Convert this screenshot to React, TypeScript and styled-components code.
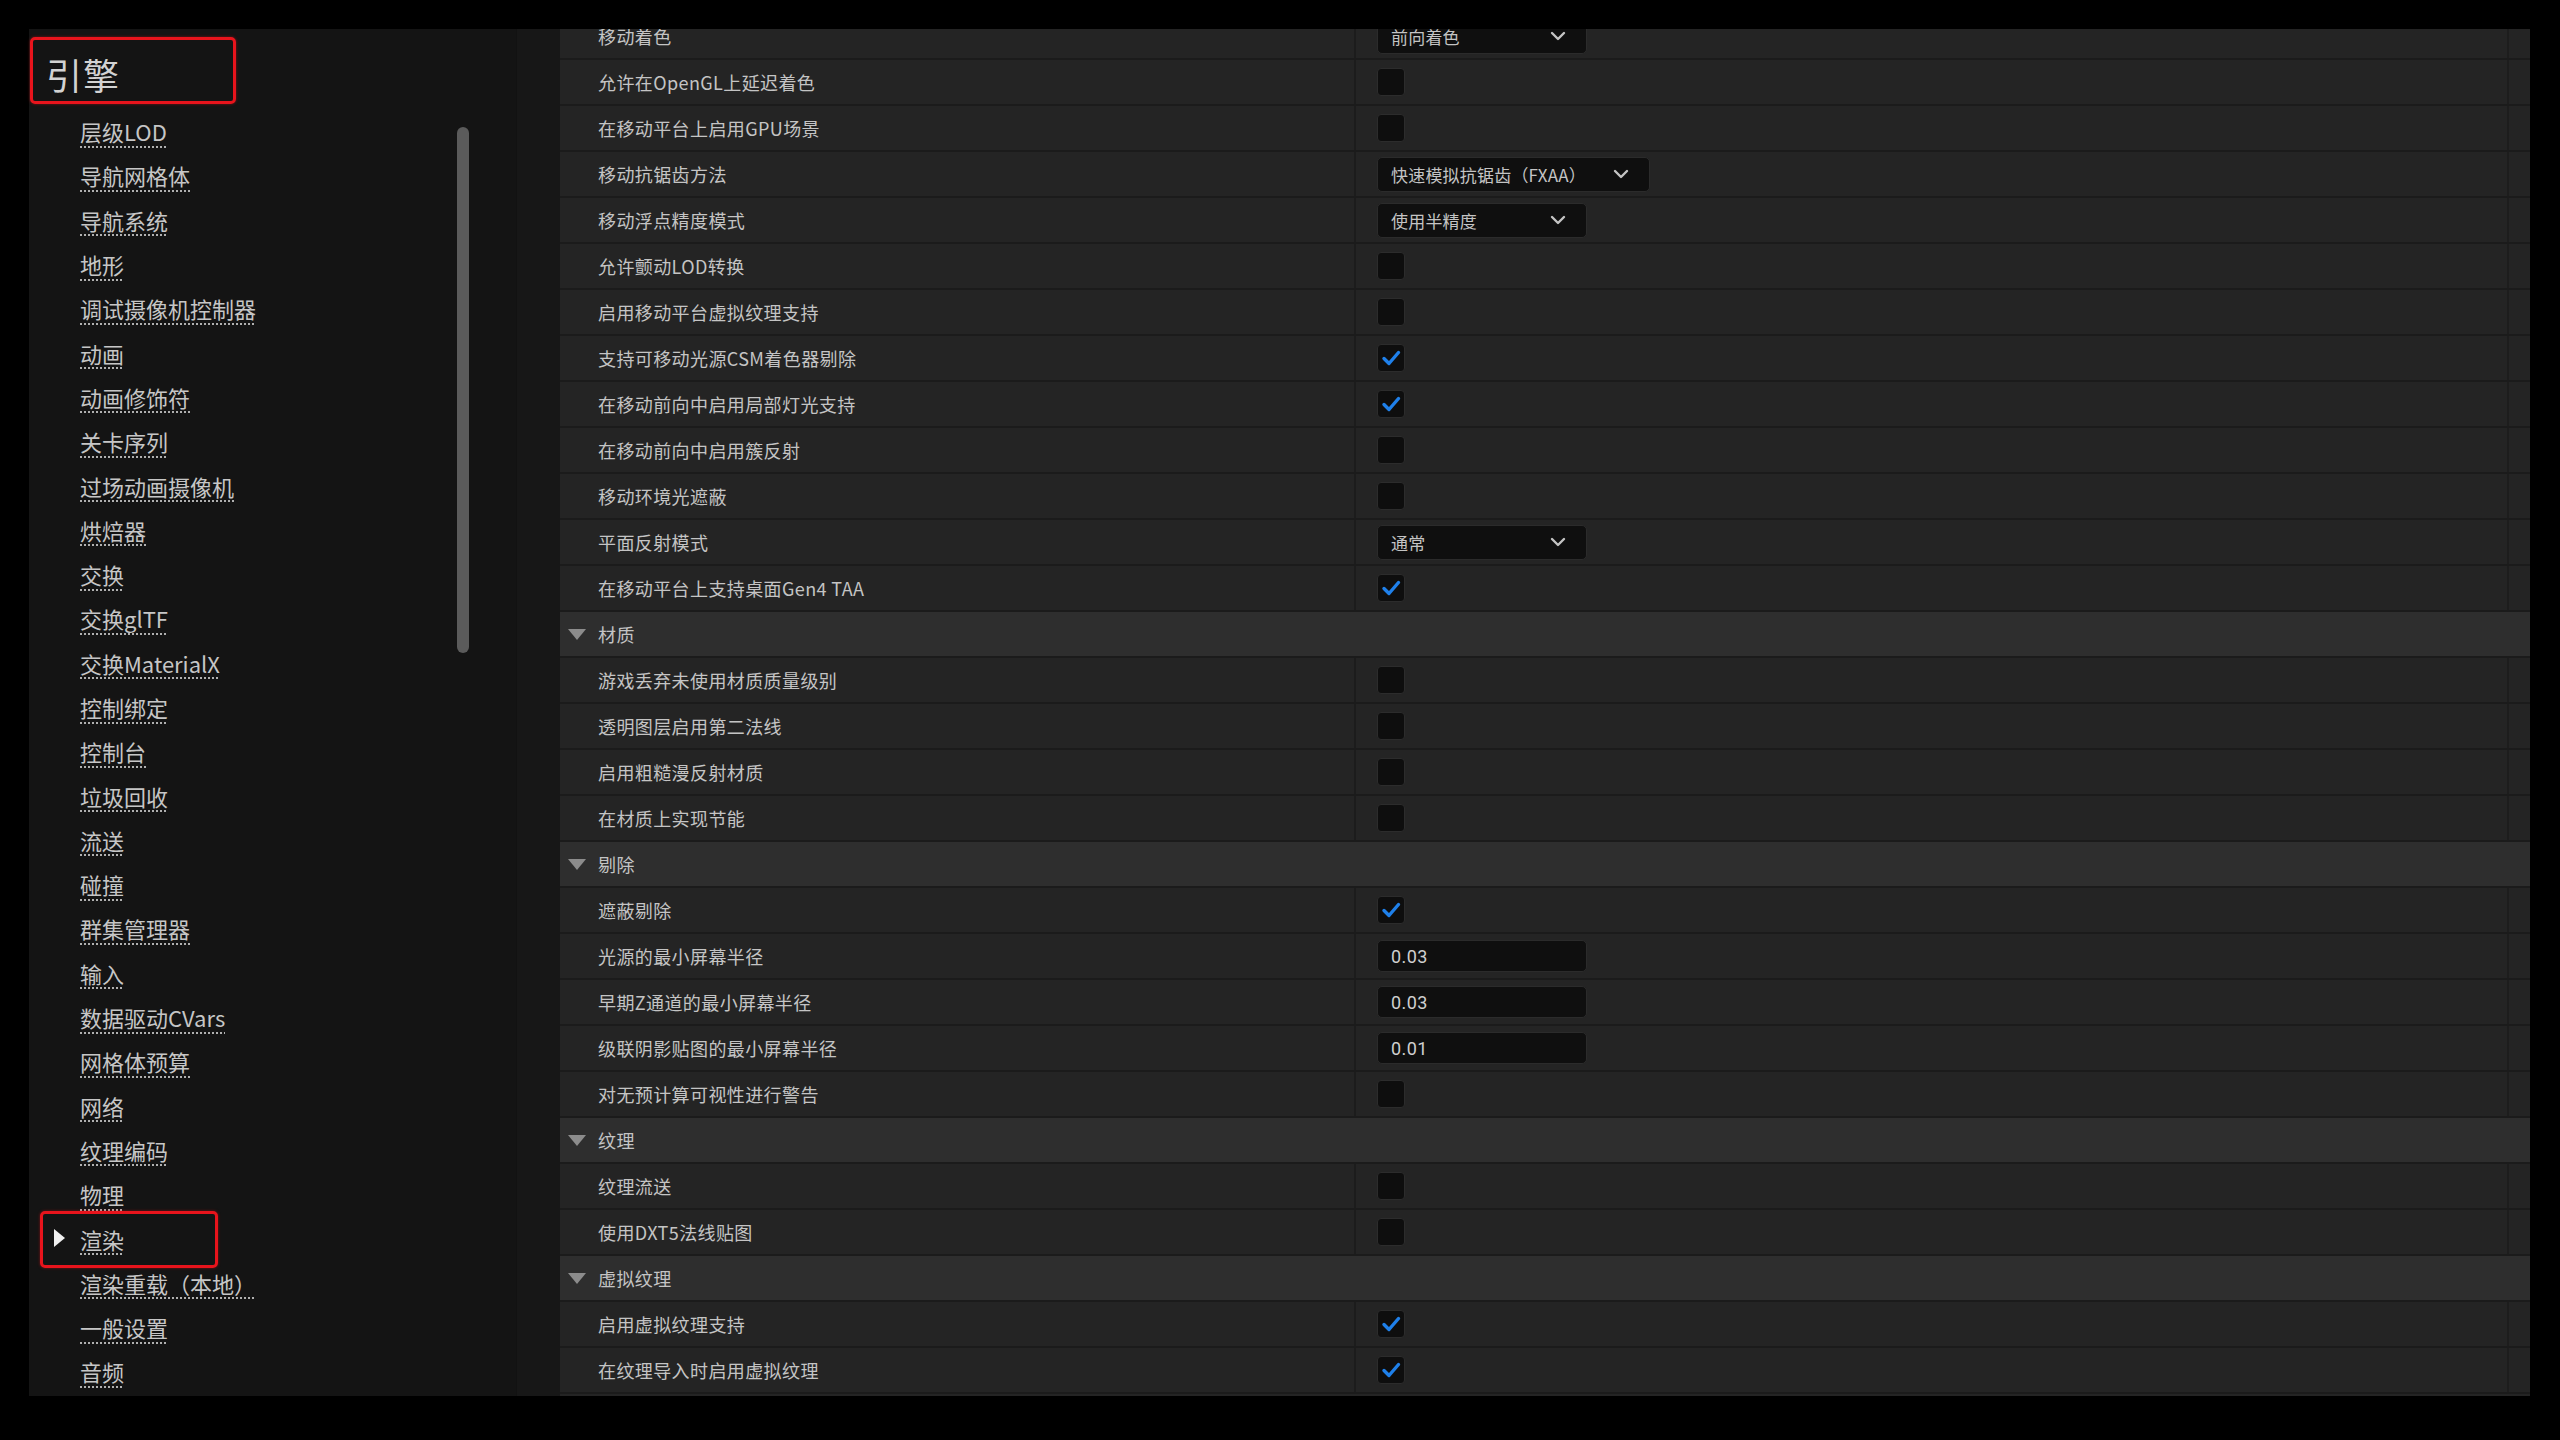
import styled, { createGlobalStyle } from "styled-components"

// settings data
type Value =
  | { kind: "check"; on: boolean }
  | { kind: "select"; text: string; width: number }
  | { kind: "number"; text: string }

type Row =
  | { kind: "header"; label: string }
  | { kind: "prop"; label: string; value: Value }

const off: Value = { kind: "check", on: false }
const on: Value = { kind: "check", on: true }

const rows: Row[] = [
  { kind: "prop", label: "移动着色", value: { kind: "select", text: "前向着色", width: 210 } },
  { kind: "prop", label: "允许在OpenGL上延迟着色", value: off },
  { kind: "prop", label: "在移动平台上启用GPU场景", value: off },
  { kind: "prop", label: "移动抗锯齿方法", value: { kind: "select", text: "快速模拟抗锯齿（FXAA）", width: 273 } },
  { kind: "prop", label: "移动浮点精度模式", value: { kind: "select", text: "使用半精度", width: 210 } },
  { kind: "prop", label: "允许颤动LOD转换", value: off },
  { kind: "prop", label: "启用移动平台虚拟纹理支持", value: off },
  { kind: "prop", label: "支持可移动光源CSM着色器剔除", value: on },
  { kind: "prop", label: "在移动前向中启用局部灯光支持", value: on },
  { kind: "prop", label: "在移动前向中启用簇反射", value: off },
  { kind: "prop", label: "移动环境光遮蔽", value: off },
  { kind: "prop", label: "平面反射模式", value: { kind: "select", text: "通常", width: 210 } },
  { kind: "prop", label: "在移动平台上支持桌面Gen4 TAA", value: on },
  { kind: "header", label: "材质" },
  { kind: "prop", label: "游戏丢弃未使用材质质量级别", value: off },
  { kind: "prop", label: "透明图层启用第二法线", value: off },
  { kind: "prop", label: "启用粗糙漫反射材质", value: off },
  { kind: "prop", label: "在材质上实现节能", value: off },
  { kind: "header", label: "剔除" },
  { kind: "prop", label: "遮蔽剔除", value: on },
  { kind: "prop", label: "光源的最小屏幕半径", value: { kind: "number", text: "0.03" } },
  { kind: "prop", label: "早期Z通道的最小屏幕半径", value: { kind: "number", text: "0.03" } },
  { kind: "prop", label: "级联阴影贴图的最小屏幕半径", value: { kind: "number", text: "0.01" } },
  { kind: "prop", label: "对无预计算可视性进行警告", value: off },
  { kind: "header", label: "纹理" },
  { kind: "prop", label: "纹理流送", value: off },
  { kind: "prop", label: "使用DXT5法线贴图", value: off },
  { kind: "header", label: "虚拟纹理" },
  { kind: "prop", label: "启用虚拟纹理支持", value: on },
  { kind: "prop", label: "在纹理导入时启用虚拟纹理", value: on },
]

const navItems = [
  "层级LOD", "导航网格体", "导航系统", "地形", "调试摄像机控制器", "动画", "动画修饰符",
  "关卡序列", "过场动画摄像机", "烘焙器", "交换", "交换glTF", "交换MaterialX", "控制绑定",
  "控制台", "垃圾回收", "流送", "碰撞", "群集管理器", "输入", "数据驱动CVars", "网格体预算",
  "网络", "纹理编码", "物理", "渲染", "渲染重载（本地）", "一般设置", "音频",
]

function renderValue(value: Value) {
  if (value.kind === "check") {
    return (
      <CheckBox>
        {value.on && (
          <svg width="22" height="22" viewBox="0 0 22 22">
            <path d="M4 11.5 L9 16.5 L18.5 5.5" fill="none" stroke="#1f80ea" strokeWidth="3.4" strokeLinecap="round" strokeLinejoin="round" />
          </svg>
        )}
      </CheckBox>
    )
  }
  if (value.kind === "select") {
    return (
      <Select $width={value.width}>
        <span>{value.text}</span>
        <svg width="16" height="10" viewBox="0 0 16 10">
          <path d="M2 2 L8 8 L14 2" fill="none" stroke="#c4c4c4" strokeWidth="2.4" strokeLinecap="round" strokeLinejoin="round" />
        </svg>
      </Select>
    )
  }
  return <NumberBox>{value.text}</NumberBox>
}

function App() {
  return (
    <>
      <GlobalStyle />
      <Screen>
        <Frame>
          <Sidebar>
            <TitleBox>引擎</TitleBox>
            <NavList>
              {navItems.map((item) => (
                <NavItem key={item} $selected={item === "渲染"}>
                  {item === "渲染" && <NavArrow />}
                  <NavLink>{item}</NavLink>
                </NavItem>
              ))}
            </NavList>
            <ScrollThumb />
          </Sidebar>
          <Gutter />
          <Details>
            <RowList>
              {rows.map((row, i) =>
                row.kind === "header" ? (
                  <HeaderRow key={i}>
                    <HeaderArrow />
                    <span>{row.label}</span>
                  </HeaderRow>
                ) : (
                  <PropRow key={i}>
                    <NameCell>{row.label}</NameCell>
                    <ValueCell>{renderValue(row.value)}</ValueCell>
                    <EndCell />
                  </PropRow>
                )
              )}
            </RowList>
          </Details>
        </Frame>
      </Screen>
    </>
  )
}

export default App

const GlobalStyle = createGlobalStyle`
  html, body {
    margin: 0;
    padding: 0;
    background: #000;
  }
  * {
    box-sizing: border-box;
  }
  body {
    font-family: "Noto Sans CJK SC", "Noto Sans", sans-serif;
  }
`

const Screen = styled.div`
  width: 2560px;
  height: 1440px;
  background: #000;
  padding: 29px 30px 44px 29px;
  overflow: hidden;
`

const Frame = styled.div`
  display: flex;
  height: 1367px;
`

// sidebar

const Sidebar = styled.aside`
  position: relative;
  width: 487px;
  flex-shrink: 0;
  background: #141414;
  padding-top: 8px;
`

const TitleBox = styled.div`
  width: 206px;
  height: 67px;
  margin-left: 1px;
  border: 3px solid #e8141c;
  border-radius: 5px;
  box-shadow: 0 0 3px rgba(232, 20, 28, 0.5);
  display: flex;
  align-items: center;
  padding-left: 13px;
  padding-top: 6px;
  color: #d2d2d2;
  font-size: 36px;
  letter-spacing: 1px;
`

const NavList = styled.ul`
  list-style: none;
  margin: 5px 0 0;
  padding: 0;
`

const NavItem = styled.li<{ $selected?: boolean }>`
  position: relative;
  height: 44.3px;
  display: flex;
  align-items: center;
  padding-left: 51px;

  &::after {
    content: "";
    display: ${(p) => (p.$selected ? "block" : "none")};
    position: absolute;
    left: 11px;
    top: -5px;
    width: 172px;
    height: 51px;
    border: 3px solid #e8141c;
    border-radius: 5px;
    box-shadow: 0 0 3px rgba(232, 20, 28, 0.5);
  }
`

const NavArrow = styled.span`
  position: absolute;
  left: 25px;
  top: 13px;
  width: 0;
  height: 0;
  border-top: 9px solid transparent;
  border-bottom: 9px solid transparent;
  border-left: 11px solid #f0f0f0;
`

const NavLink = styled.span`
  color: #c6c6c6;
  font-size: 22px;
  line-height: 26px;
  text-decoration: underline dotted #b0b0b0;
  text-decoration-thickness: 2px;
  text-underline-offset: 5px;
`

const ScrollThumb = styled.div`
  position: absolute;
  left: 428px;
  top: 98px;
  width: 12px;
  height: 526px;
  border-radius: 6px;
  background: #5b5b5b;
`

const Gutter = styled.div`
  width: 44px;
  flex-shrink: 0;
  background: #171717;
  border-left: 1px solid #121212;
`

// details panel

const Details = styled.section`
  flex: 1;
  overflow: hidden;
  background: #242424;
`

const RowList = styled.div`
  margin-top: -15px;
  display: flex;
  flex-direction: column;
`

const PropRow = styled.div`
  height: 46px;
  display: grid;
  grid-template-columns: 796px 1fr 23px;
  background: #242424;
  border-bottom: 2px solid #1b1b1b;
  color: #c4c4c4;
  font-size: 18px;
  letter-spacing: 0.4px;
`

const NameCell = styled.div`
  display: flex;
  align-items: center;
  padding-left: 38px;
  border-right: 2px solid #1c1c1c;
`

const ValueCell = styled.div`
  display: flex;
  align-items: center;
  padding-left: 21px;
`

const EndCell = styled.div`
  border-left: 2px solid #1d1d1d;
`

const HeaderRow = styled.div`
  height: 46px;
  display: flex;
  align-items: center;
  background: #2e2e2e;
  border-bottom: 2px solid #1b1b1b;
  color: #c4c4c4;
  font-size: 18px;
  letter-spacing: 0.4px;
`

const HeaderArrow = styled.span`
  width: 0;
  height: 0;
  margin-left: 8px;
  margin-right: 12px;
  border-left: 9px solid transparent;
  border-right: 9px solid transparent;
  border-top: 11px solid #8c8c8c;
`

const CheckBox = styled.div`
  width: 28px;
  height: 28px;
  border-radius: 4px;
  background: #0e0e0e;
  border: 1px solid #2c2c2c;
  display: flex;
  align-items: center;
  justify-content: center;
`

const Select = styled.div<{ $width: number }>`
  width: ${(p) => p.$width}px;
  height: 35px;
  border-radius: 5px;
  background: #0f0f0f;
  border: 1px solid #2b2b2b;
  display: flex;
  align-items: center;
  justify-content: space-between;
  padding: 0 20px 0 13px;
  color: #c4c4c4;
  font-size: 17px;
  letter-spacing: 0.2px;
`

const NumberBox = styled.div`
  width: 210px;
  height: 32px;
  border-radius: 5px;
  background: #0f0f0f;
  border: 1px solid #2b2b2b;
  display: flex;
  align-items: center;
  padding-left: 13px;
  color: #d0d0d0;
  font-family: Roboto, "Noto Sans", sans-serif;
  font-size: 18px;
`
